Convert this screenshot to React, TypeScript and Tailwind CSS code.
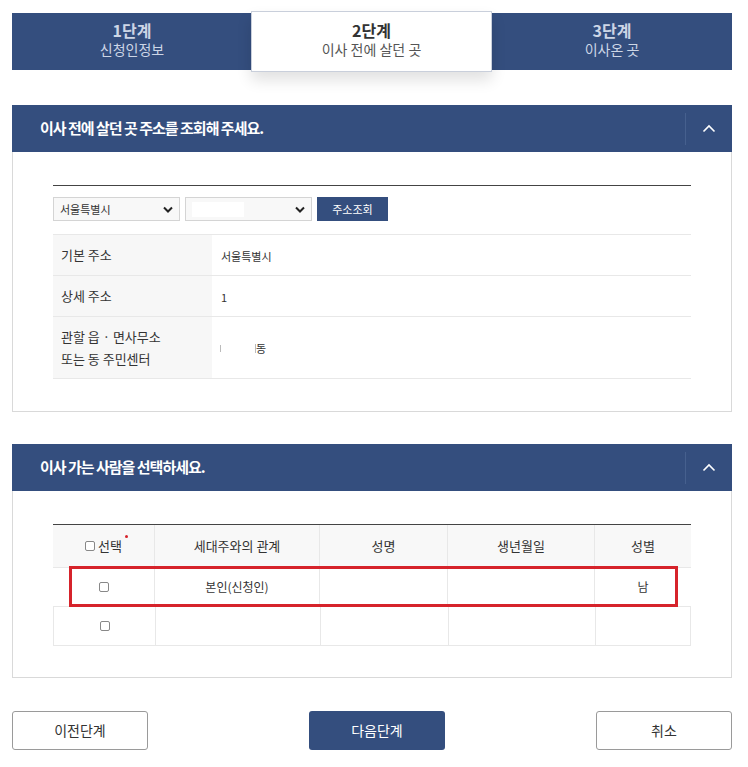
import React from "react";

const font = { fontFamily: '"Noto Sans CJK KR", "Noto Sans", sans-serif' };

function Chevron() {
  return (
    <svg width="14" height="9" viewBox="0 0 14 9" fill="none">
      <path d="M1.5 7.5L7 2L12.5 7.5" stroke="white" strokeWidth="1.6" />
    </svg>
  );
}

function SectionHeader({ title }: { title: string }) {
  return (
    <div className="h-[47px] bg-[#344e7e] flex items-center">
      <div className="flex-1 pl-[28px] text-white font-bold text-[15px] tracking-[-1px]">{title}</div>
      <div className="w-px h-[32px] bg-[#46608e]" />
      <div className="w-[46px] flex items-center justify-center">
        <Chevron />
      </div>
    </div>
  );
}

function SelectBox({ children }: { children?: React.ReactNode }) {
  return (
    <div className="w-[127px] h-[24px] border border-[#d4d4d4] bg-[#f8f8f8] flex items-center pl-[6px] pr-[6px] text-[11px] text-[#333]">
      <div className="flex-1 flex items-center">{children}</div>
      <svg width="10" height="7" viewBox="0 0 10 7">
        <path d="M1 1.5L5 5.5L9 1.5" stroke="#222" strokeWidth="2" fill="none" />
      </svg>
    </div>
  );
}

function Check() {
  return <span className="inline-block w-[10px] h-[10px] border border-[#888] rounded-[2px] bg-white" />;
}

export default function App() {
  return (
    <div className="w-[748px] h-[767px] bg-white overflow-hidden" style={font}>
      <div className="ml-[12px] w-[720px] pt-[13px]">
        {/* steps */}
        <div className="h-[57px] bg-[#344e7e] grid grid-cols-3">
          <div className="flex flex-col items-center justify-center pb-[5px] leading-[19px]">
            <span className="text-[16px] font-bold text-[#cdd6e6]">1단계</span>
            <span className="text-[14px] text-[#cdd6e6]">신청인정보</span>
          </div>
          <div className="relative -mt-[2px] -ml-px h-[61px] bg-white border border-[#c9cfdb] shadow-[0_8px_14px_rgba(0,0,0,0.12)] flex flex-col items-center justify-center pb-[3px] leading-[19px]">
            <span className="text-[16px] font-bold text-[#333]">2단계</span>
            <span className="text-[14px] text-[#555]">이사 전에 살던 곳</span>
          </div>
          <div className="flex flex-col items-center justify-center pb-[5px] leading-[19px]">
            <span className="text-[16px] font-bold text-[#cdd6e6]">3단계</span>
            <span className="text-[14px] text-[#cdd6e6]">이사온 곳</span>
          </div>
        </div>

        {/* section 1 */}
        <div className="mt-[35px]">
          <SectionHeader title="이사 전에 살던 곳 주소를 조회해 주세요." />
          <div className="border border-t-0 border-[#d9d9d9] px-[40px] pt-[33px] pb-[32px]">
            <div className="border-t border-[#444]" />
            <div className="flex gap-[5px] mt-[11px] mb-[13px]">
              <SelectBox>서울특별시</SelectBox>
              <SelectBox>
                <span className="w-[52px] h-[15px] bg-white" />
              </SelectBox>
              <div className="w-[71px] h-[24px] bg-[#344e7e] text-white text-[11px] flex items-center justify-center">주소조회</div>
            </div>
            <div className="border-t border-[#e8e8e8] text-[13px] text-[#333]">
              <div className="flex h-[41px] border-b border-[#e8e8e8]">
                <div className="w-[159px] bg-[#f7f7f7] pl-[8px] flex items-center">기본 주소</div>
                <div className="pl-[9px] pt-[2px] flex items-center text-[11px]">서울특별시</div>
              </div>
              <div className="flex h-[41px] border-b border-[#e8e8e8]">
                <div className="w-[159px] bg-[#f7f7f7] pl-[8px] flex items-center">상세 주소</div>
                <div className="pl-[9px] pt-[2px] flex items-center text-[11px]">1</div>
              </div>
              <div className="flex h-[62px] border-b border-[#e8e8e8]">
                <div className="w-[159px] bg-[#f7f7f7] pl-[8px] flex flex-col justify-center leading-[22px]">
                  <span>관할 읍 · 면사무소</span>
                  <span>또는 동 주민센터</span>
                </div>
                <div className="pl-[8px] pt-[2px] flex items-center text-[11px]">
                  <span className="w-px h-[7px] bg-[#bbb]" />
                  <span className="w-[34px]" />
                  <span className="w-px h-[9px] bg-[#bbb]" />
                  <span>동</span>
                </div>
              </div>
            </div>
          </div>
        </div>

        {/* section 2 */}
        <div className="mt-[32px]">
          <SectionHeader title="이사 가는 사람을 선택하세요." />
          <div className="border border-t-0 border-[#d9d9d9] px-[40px] pt-[33px] pb-[31px]">
            <div className="relative border-t border-[#444] text-[13px] text-[#333]">
              <div className="grid grid-cols-[102px_165px_128px_147px_1fr] h-[43px] bg-[#f8f8f8] border-b border-[#e8e8e8]">
                <div className="flex items-center justify-center gap-[3px] border-r border-[#e8e8e8]">
                  <Check />
                  <span className="relative">
                    선택
                    <span className="absolute -right-[6px] -top-[1px] w-[3px] h-[3px] rounded-full bg-[#d6232b]" />
                  </span>
                </div>
                <div className="flex items-center justify-center border-r border-[#e8e8e8]">세대주와의 관계</div>
                <div className="flex items-center justify-center border-r border-[#e8e8e8]">성명</div>
                <div className="flex items-center justify-center border-r border-[#e8e8e8]">생년월일</div>
                <div className="flex items-center justify-center">성별</div>
              </div>
              <div className="grid grid-cols-[102px_165px_128px_147px_1fr] h-[39px] border-b border-[#e8e8e8]">
                <div className="flex items-center justify-center border-r border-[#e8e8e8]"><Check /></div>
                <div className="flex items-center justify-center border-r border-[#e8e8e8] text-[12px]">본인(신청인)</div>
                <div className="border-r border-[#e8e8e8]" />
                <div className="border-r border-[#e8e8e8]" />
                <div className="flex items-center justify-center text-[12px]">남</div>
              </div>
              <div className="grid grid-cols-[102px_165px_128px_147px_1fr] h-[39px] border-b border-l border-r border-[#e8e8e8]">
                <div className="flex items-center justify-center border-r border-[#e8e8e8]"><Check /></div>
                <div className="border-r border-[#e8e8e8]" />
                <div className="border-r border-[#e8e8e8]" />
                <div className="border-r border-[#e8e8e8]" />
                <div />
              </div>
              <div className="absolute left-[16px] right-[13px] top-[41px] h-[41px] border-[3px] border-[#d6232b]" />
            </div>
          </div>
        </div>

        {/* buttons */}
        <div className="mt-[33px] flex">
          <button className="w-[136px] h-[39px] border border-[#9a9a9a] rounded-[3px] bg-white text-[14px] text-[#333]">이전단계</button>
          <button className="ml-[161px] w-[136px] h-[39px] rounded-[3px] bg-[#344e7e] text-[14px] text-white">다음단계</button>
          <button className="ml-[151px] w-[136px] h-[39px] border border-[#9a9a9a] rounded-[3px] bg-white text-[14px] text-[#333]">취소</button>
        </div>
      </div>
    </div>
  );
}
